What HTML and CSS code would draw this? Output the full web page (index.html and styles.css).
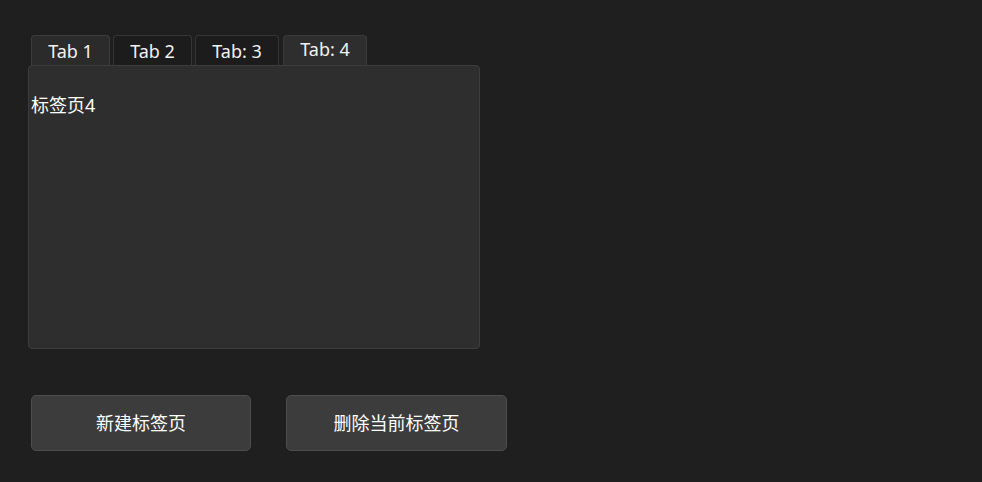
FILE: index.html
```html
<!DOCTYPE html>
<html lang="zh">
<head>
<meta charset="utf-8">
<title>Tabs</title>
<link rel="stylesheet" href="styles.css">
</head>
<body>
<div class="app">
  <div class="tabwidget">
    <div class="tabbar">
      <div class="tab tab-a">Tab 1</div>
      <div class="tab tab-b">Tab 2</div>
      <div class="tab tab-c">Tab: 3</div>
      <div class="tab tab-d selected">Tab: 4</div>
    </div>
    <div class="panel">
      <div class="panel-text">标签页4</div>
    </div>
  </div>
  <div class="actions">
    <button class="btn btn-new">新建标签页</button>
    <button class="btn">删除当前标签页</button>
  </div>
</div>
</body>
</html>
```

FILE: styles.css
```css
html, body {
  margin: 0;
  padding: 0;
  background: #1f1f1f;
  width: 982px;
  height: 482px;
  overflow: hidden;
}

.app {
  padding: 35px 0 0 28px;
  font-family: "Noto Sans", "Noto Sans CJK SC", sans-serif;
  color: #ffffff;
}

.tabwidget {
  display: flex;
  flex-direction: column;
  width: 452px;
}

.tabbar {
  display: flex;
  gap: 3px;
  padding-left: 3px;
  height: 30px;
}

.tab {
  box-sizing: border-box;
  height: 31px;
  border: 1px solid #353535;
  border-bottom: none;
  border-radius: 4px 4px 0 0;
  background: #1c1c1c;
  font-size: 18px;
  line-height: 30px;
  text-align: center;
  color: #f2f2f2;
}

.tab-a { width: 79px; background: #2b2b2b; border-color: #3c3c3c; }
.tab-b { width: 79px; }
.tab-c { width: 84px; }
.tab-d { width: 84px; margin-left: 1px; }

.tab.selected {
  background: #2e2e2e;
  line-height: 27px;
  border-color: #3a3a3a;
}

.panel {
  box-sizing: border-box;
  height: 284px;
  background: #2e2e2e;
  border: 1px solid #3c3c3c;
  border-radius: 4px;
  padding: 27px 0 0 2px;
}

.panel-text {
  font-size: 18px;
  line-height: 24px;
  color: #ffffff;
}

.actions {
  display: flex;
  gap: 35px;
  margin-top: 46px;
  padding-left: 3px;
}

.btn {
  box-sizing: border-box;
  width: 221px;
  height: 56px;
  background: #3c3c3c;
  border: 1px solid #4d4d4d;
  border-radius: 5px;
  color: #ffffff;
  font-family: "Noto Sans CJK SC", "Noto Sans", sans-serif;
  font-size: 18px;
  padding: 0 0 2px 0;
}

.btn-new {
  width: 220px;
}
```
